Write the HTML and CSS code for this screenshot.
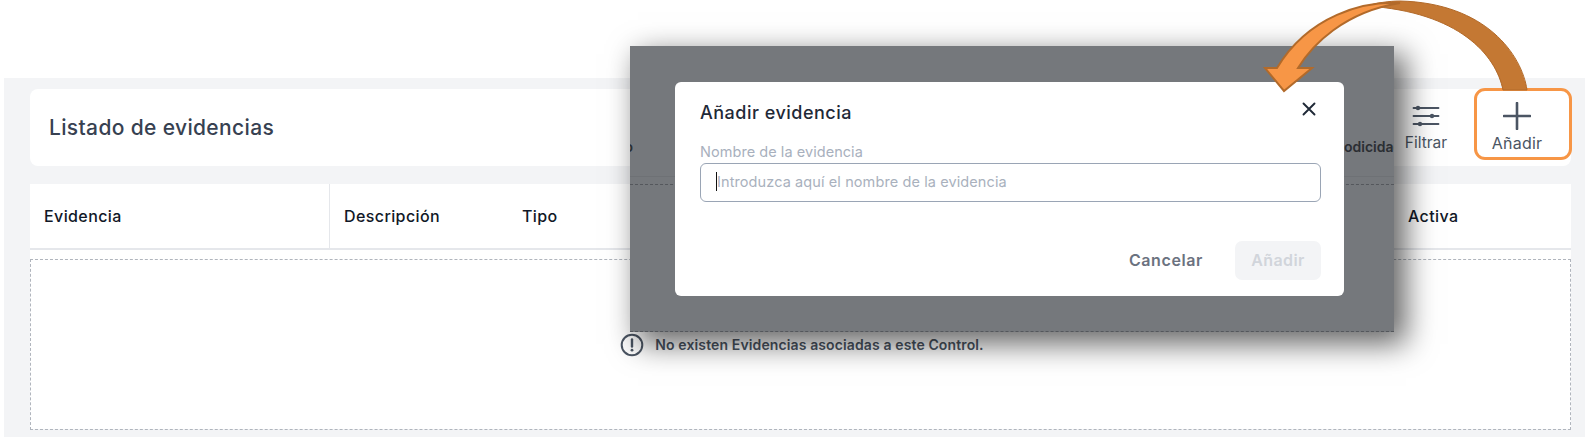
FILE: index.html
```html
<!DOCTYPE html>
<html lang="es">
<head>
<meta charset="utf-8">
<title>Listado de evidencias</title>
<link rel="stylesheet" href="styles.css">
</head>
<body>
<main class="page">
  <header class="card-head">
    <h1 class="title">Listado de evidencias</h1>
    <div class="actions">
      <button class="action action-filter">
        <svg class="icon-filter" viewBox="0 0 28 24" width="28" height="24"><path d="M1.5 4H26.5M1.5 12H26.5M1.5 20H26.5" stroke="#4b5563" stroke-width="1.8" stroke-linecap="round"/><circle cx="6" cy="4" r="2.2" fill="#4b5563"/><circle cx="20" cy="12" r="2.2" fill="#4b5563"/><circle cx="8" cy="20" r="2.2" fill="#4b5563"/></svg>
        <span>Filtrar</span>
      </button>
      <button class="action action-add">
        <svg class="icon-plus" viewBox="0 0 28 28" width="28" height="28"><path d="M14 1V27M1 14H27" stroke="#4b5563" stroke-width="2.6" stroke-linecap="round"/></svg>
        <span>Añadir</span>
      </button>
    </div>
  </header>
  <section class="table">
    <div class="thead">
      <div class="th th-ev">Evidencia</div>
      <div class="th th-desc">Descripción</div>
      <div class="th th-tipo">Tipo</div>
      <div class="th th-act">Activa</div>
    </div>
    <div class="empty">
      <svg viewBox="0 0 24 24" width="24" height="24"><circle cx="12" cy="12" r="10.3" fill="none" stroke="#4b5563" stroke-width="2"/><path d="M12 6.5V13.5" stroke="#4b5563" stroke-width="2.4" stroke-linecap="round"/><circle cx="12" cy="17.2" r="1.4" fill="#4b5563"/></svg>
      <span>No existen Evidencias asociadas a este Control.</span>
    </div>
  </section>
</main>

<div class="overlay">
  <span class="under under-left">o</span>
  <span class="under under-per">odicidad</span>
  <i class="under-line"></i>
  <i class="under-dash dash-top"></i>
  <i class="under-dash dash-bottom"></i>
  <div class="modal">
    <div class="modal-head">
      <h2 class="modal-title">Añadir evidencia</h2>
      <svg class="close" viewBox="0 0 14 14" width="14" height="14"><path d="M1.5 1.5L12.5 12.5M12.5 1.5L1.5 12.5" stroke="#1f2937" stroke-width="1.9" stroke-linecap="round"/></svg>
    </div>
    <label class="field-label">Nombre de la evidencia</label>
    <div class="input"><i class="caret"></i><span>Introduzca aquí el nombre de la evidencia</span></div>
    <div class="modal-foot">
      <button class="btn-cancel">Cancelar</button>
      <button class="btn-add">Añadir</button>
    </div>
  </div>
</div>

<svg class="arrow" viewBox="0 0 300 100" width="300" height="100">
  <path d="M263 90 C258 55 222 3 136 1 C125 1 112 3 103 6 C195 12 232 55 239 90 Z" fill="#c47833" stroke="#b26a2a" stroke-width="1"/>
  <path d="M136 3 C100 1 45 15 13 68 L1 68 L20 91 L48 68 L34 68 C48 45 80 12 136 3 Z" fill="#f79646" stroke="#b26a2a" stroke-width="2" stroke-linejoin="miter"/>
</svg>
</body>
</html>
```

FILE: styles.css
```css
* { box-sizing: border-box; }
html, body { margin: 0; padding: 0; }
body {
  width: 1586px;
  height: 438px;
  overflow: hidden;
  background: #fff;
  font-family: Inter, "Open Sans", sans-serif;
  color: #111827;
  padding: 78px 1px 1px 4px;
  position: relative;
}
.page {
  height: 359px;
  background: #f3f4f6;
  padding: 11px 14px 0 26px;
}
.card-head {
  height: 77px;
  background: #fff;
  border-radius: 8px;
  display: flex;
  align-items: center;
  justify-content: space-between;
  padding: 0 0 0 19px;
}
.title {
  margin: 0;
  font-size: 21px;
  font-weight: 500;
  letter-spacing: .35px;
  color: #374151;
}
.actions { display: flex; align-items: flex-start; height: 100%; }
.action {
  border: 0;
  background: none;
  padding: 0;
  font: inherit;
  font-size: 15.5px;
  line-height: 18px;
  color: #4b5563;
  display: flex;
  flex-direction: column;
  align-items: center;
}
.action-filter { width: 66px; margin-right: 15px; gap: 6px; padding-top: 15px; }
.action-add {
  width: 98px;
  height: 72px;
  margin: -1px -1px 0 0;
  border: 3px solid #f79646;
  border-radius: 11px;
  gap: 4px;
  padding: 11px 12px 0 0;
  background: #fff;
  font-size: 16px;
  letter-spacing: .2px;
}
.table { margin-top: 18px; background: #fff; height: 245px; }
.thead {
  height: 66px;
  display: flex;
  align-items: center;
  border-bottom: 2px solid #e5e7eb;
}
.th { font-size: 16px; font-weight: 500; letter-spacing: .4px; color: #111827; }
.th-ev { width: 300px; height: 64px; padding-left: 14px; line-height: 64px; border-right: 1px solid #e5e7eb; }
.th-desc { width: 178px; padding-left: 14px; }
.th-tipo { width: 878px; padding-left: 14px; }
.th-act { padding-left: 22px; }
.empty {
  margin-top: 9px;
  height: 171px;
  border: 1px dashed #b0b5bd;
  display: flex;
  align-items: center;
  justify-content: center;
  gap: 11px;
  font-size: 14px;
  font-weight: 600;
  letter-spacing: .12px;
  color: #4b5563;
  padding-left: 3px;
}
.empty svg { flex: none; }

.overlay {
  position: absolute;
  left: 630px;
  top: 46px;
  width: 764px;
  height: 286px;
  background: #75787c;
  box-shadow: 10px 10px 28px 2px rgba(0,0,0,.6);
}
.under { position: absolute; overflow: hidden; white-space: nowrap; font-size: 14px; font-weight: 600; color: #2b2e33; }
.under-left { left: 0; top: 92px; width: 3px; direction: rtl; }
.under-per { right: 0; top: 92px; width: 50px; }
.under-line { position: absolute; left: 0; right: 0; top: 130px; border-top: 1px solid #6e7175; }
.under-dash { position: absolute; left: 0; right: 0; border-top: 1px dashed #54575c; }
.dash-top { top: 138px; }
.dash-bottom { bottom: 0; }
.modal {
  position: absolute;
  left: 45px;
  top: 36px;
  width: 669px;
  height: 214px;
  background: #fff;
  border-radius: 6px;
  padding: 20px 23px 0 25px;
  display: flex;
  flex-direction: column;
}
.modal-head { display: flex; justify-content: space-between; align-items: center; height: 20px; padding-right: 5px; }
.modal-title { margin: 0; font-size: 18px; font-weight: 500; letter-spacing: .5px; color: #1f2937; }
.close { margin-top: -6px; }
.field-label { margin-top: 21px; font-size: 14.5px; letter-spacing: .05px; color: #a8b0bd; line-height: 18px; }
.input {
  margin-top: 2px;
  height: 39px;
  border: 1px solid #9aa5b5;
  border-radius: 6px;
  padding: 0 0 2px 15px;
  display: flex;
  align-items: center;
  font-size: 14.5px;
  letter-spacing: .1px;
  color: #a9b1bd;
}
.caret { width: 1px; height: 19px; background: #111; }
.modal-foot { margin-top: 39px; display: flex; justify-content: flex-end; align-items: center; gap: 16px; }
.btn-cancel { border: 0; background: none; padding: 0 16px 2px; font: inherit; font-size: 16px; font-weight: 600; letter-spacing: .6px; color: #6b7280; }
.btn-add { width: 86px; height: 39px; border: 0; border-radius: 7px; padding: 0 0 2px; background: #f3f4f6; font: inherit; font-size: 16px; font-weight: 600; letter-spacing: .4px; color: #d1d5db; }
.arrow { position: absolute; left: 1264px; top: 0; overflow: visible; }
```
